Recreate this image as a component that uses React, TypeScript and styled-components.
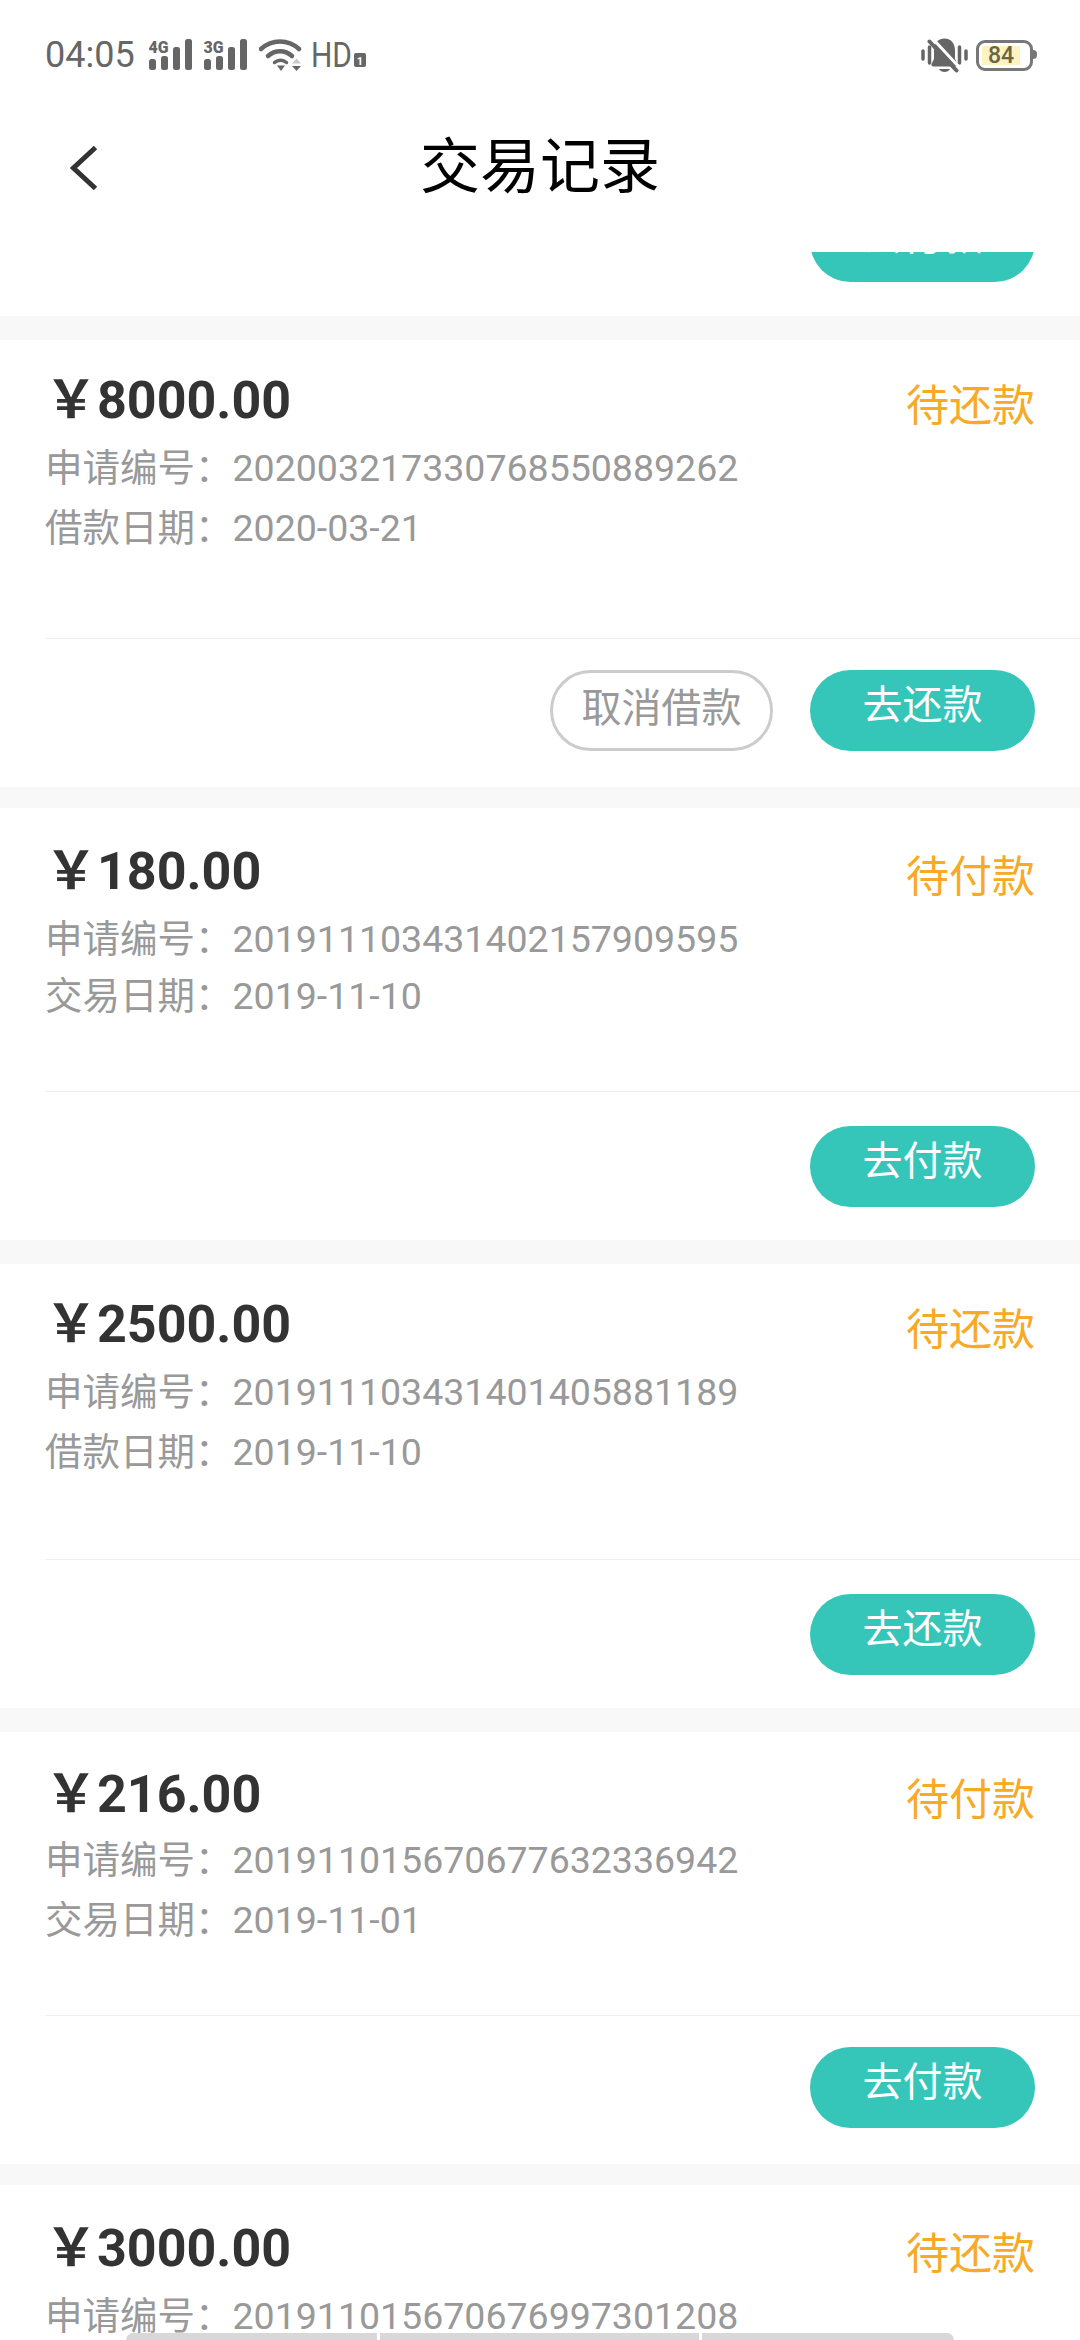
import styled, { createGlobalStyle } from 'styled-components';

const GlobalStyle = createGlobalStyle`
  html, body {
    margin: 0;
    padding: 0;
    background: #fff;
  }
  * {
    box-sizing: border-box;
  }
`;

const FONT = `Roboto, "Noto Sans CJK SC", sans-serif`;

type Record = {
  amount: string;
  status: string;
  id: string;
  dateLabel: string;
  date?: string;
  action?: string;
  cancel?: boolean;
  gap: number;
  top: number;
  idGap: number;
  dateGap: number;
  bodyGap: number;
  footTop: number;
  footBottom: number;
};

const records: Record[] = [
  { amount: '8000.00', status: '待还款', id: '202003217330768550889262', dateLabel: '借款日期', date: '2020-03-21', action: '去还款', cancel: true, gap: 24, top: 26, idGap: 14, dateGap: 3, bodyGap: 81, footTop: 31, footBottom: 36 },
  { amount: '180.00', status: '待付款', id: '201911103431402157909595', dateLabel: '交易日期', date: '2019-11-10', action: '去付款', gap: 21, top: 29, idGap: 14, dateGap: 0, bodyGap: 66, footTop: 34, footBottom: 33 },
  { amount: '2500.00', status: '待还款', id: '201911103431401405881189', dateLabel: '借款日期', date: '2019-11-10', action: '去还款', gap: 24, top: 26, idGap: 14, dateGap: 3, bodyGap: 78, footTop: 34, footBottom: 33 },
  { amount: '216.00', status: '待付款', id: '201911015670677632336942', dateLabel: '交易日期', date: '2019-11-01', action: '去付款', gap: 24, top: 28, idGap: 12, dateGap: 3, bodyGap: 66, footTop: 31, footBottom: 36 },
  { amount: '3000.00', status: '待还款', id: '201911015670676997301208', dateLabel: '借款日期', gap: 21, top: 29, idGap: 14, dateGap: 3, bodyGap: 0, footTop: 0, footBottom: 0 },
];

function SignalIcon({ label }: { label: string }) {
  return (
    <svg width="44" height="47" viewBox="0 -7 44 47" fill="#666">
      <text x="-0.5" y="13.5" fontFamily="Roboto, sans-serif" fontWeight="900" fontSize="17" textLength="20" lengthAdjust="spacingAndGlyphs">
        {label}
      </text>
      <rect x="0" y="20" width="7" height="11" rx="2.5" />
      <rect x="12" y="17" width="7" height="14" rx="2.5" />
      <rect x="24" y="8" width="7" height="23" rx="2.5" />
      <rect x="36" y="0" width="7" height="31" rx="2.5" />
    </svg>
  );
}

function WifiIcon() {
  return (
    <svg width="43" height="34" viewBox="0 0 43 34" fill="none">
      <path d="M2 11 C13 1 29 1 40 11" stroke="#666" strokeWidth="4.5" strokeLinecap="round" />
      <path d="M9 18 C16 11.5 26 11.5 33 18" stroke="#666" strokeWidth="4.5" strokeLinecap="round" />
      <path d="M15.5 24.5 C19 21.5 24 21.5 27.5 24.5" stroke="#666" strokeWidth="3.5" strokeLinecap="round" />
      <path d="M18 27.5 H26 L22 33 Z" fill="#666" />
      <path d="M33 25.5 L37.5 20.5 L42 25.5 Z" fill="#c9c9c9" />
      <path d="M33 28 H42 L37.5 33 Z" fill="#666" />
    </svg>
  );
}

function HdIcon() {
  return (
    <HdSvg width="56" height="47" viewBox="0 -10 56 47">
      <text x="0" y="25" fill="#666" fontFamily="Roboto, sans-serif" fontSize="35" textLength="41" lengthAdjust="spacingAndGlyphs">
        HD
      </text>
      <rect x="43" y="11" width="12" height="14" rx="2" fill="#666" />
      <text x="49" y="22.5" fill="#fff" fontFamily="Roboto, sans-serif" fontWeight="700" fontSize="11" textAnchor="middle">
        1
      </text>
    </HdSvg>
  );
}

function MutedBellIcon() {
  return (
    <svg width="47" height="35" viewBox="0 0 47 35" fill="none">
      <path d="M2 13 V21 M8.5 9 V25 M38.5 9 V25 M45 13 V21" stroke="#666" strokeWidth="3.5" strokeLinecap="round" />
      <path d="M23.5 0.5 C16.5 0.5 13 6 13 12.5 V21 L10.5 26 C10 27.5 11 28.5 12.5 28.5 H34.5 C36 28.5 37 27.5 36.5 26 L34 21 V12.5 C34 6 30.5 0.5 23.5 0.5 Z" fill="#666" />
      <path d="M18 31 C20 35 27 35 29 31 Z" fill="#666" />
      <path d="M11.5 0.5 L38.5 29.5" stroke="#fff" strokeWidth="3" />
      <path d="M8.5 3.5 L35.5 32.5" stroke="#666" strokeWidth="4" strokeLinecap="round" />
    </svg>
  );
}

function BackIcon() {
  return (
    <svg width="28" height="46" viewBox="0 0 28 46" fill="none">
      <path d="M25.5 2.5 L3.5 23 L25.5 43.5" stroke="#333" strokeWidth="5" />
    </svg>
  );
}

export default function App() {
  return (
    <Screen>
      <GlobalStyle />
      <Header>
        <StatusBar>
          <StatusGroup>
            <Clock>04:05</Clock>
            <SignalIcon label="4G" />
            <SignalIcon label="3G" />
            <WifiIcon />
            <HdIcon />
          </StatusGroup>
          <StatusGroup $gap={8}>
            <MutedBellIcon />
            <Battery>
              <BatteryLevel>84</BatteryLevel>
            </Battery>
          </StatusGroup>
        </StatusBar>
        <NavBar>
          <BackButton>
            <BackIcon />
          </BackButton>
          <Title>交易记录</Title>
        </NavBar>
      </Header>

      <List>
        <ScrolledTail>
          <ActionButton>去付款</ActionButton>
        </ScrolledTail>
        {records.map((r) => (
          <Card key={r.id} $gap={r.gap} $top={r.top}>
            <CardHead>
              <Amount>
                <Currency>￥</Currency>
                {r.amount}
              </Amount>
              <Status>{r.status}</Status>
            </CardHead>
            <Meta $gap={r.idGap}>申请编号：{r.id}</Meta>
            {r.date && (
              <Meta $gap={r.dateGap}>
                {r.dateLabel}：{r.date}
              </Meta>
            )}
            {r.action && (
              <>
                <Divider $gap={r.bodyGap} />
                <CardFoot $top={r.footTop} $bottom={r.footBottom}>
                  {r.cancel && <GhostButton>取消借款</GhostButton>}
                  <ActionButton>{r.action}</ActionButton>
                </CardFoot>
              </>
            )}
          </Card>
        ))}
      </List>

      <HomeBar>
        <HomeSegment $width={251} $left />
        <HomeSegment $width={319} />
        <HomeSegment $width={252} $right />
      </HomeBar>
    </Screen>
  );
}

const Screen = styled.div`
  position: relative;
  width: 1080px;
  height: 2340px;
  overflow: hidden;
  background: #f8f8f8;
  font-family: ${FONT};
`;

const Header = styled.header`
  height: 252px;
  background: #fff;
`;

const StatusBar = styled.div`
  display: flex;
  align-items: center;
  justify-content: space-between;
  height: 110px;
  padding: 0 44px 0 45px;
`;

const StatusGroup = styled.div<{ $gap?: number }>`
  display: flex;
  align-items: center;
  gap: ${(p) => p.$gap ?? 11}px;
`;

const Clock = styled.span`
  font-size: 36px;
  color: #666;
  margin-right: 3px;
`;

const HdSvg = styled.svg`
  margin-left: -2px;
`;

const Battery = styled.div`
  position: relative;
  display: flex;
  align-items: center;
  width: 57px;
  height: 31px;
  margin-right: 3px;
  padding-left: 3px;
  border: 3px solid #777;
  border-radius: 9px;

  &::after {
    content: '';
    position: absolute;
    right: -7px;
    top: 7px;
    width: 4px;
    height: 9px;
    border-radius: 0 4px 4px 0;
    background: #777;
  }
`;

const BatteryLevel = styled.span`
  width: 38px;
  height: 19px;
  background: #fdf3c0;
  color: #6b6545;
  font-size: 23px;
  font-weight: 500;
  line-height: 19px;
  text-align: center;
`;

const NavBar = styled.nav`
  display: grid;
  grid-template-columns: 1fr auto 1fr;
  align-items: center;
  height: 116px;
`;

const BackButton = styled.div`
  display: flex;
  padding-left: 70px;
`;

const Title = styled.h1`
  margin: 0;
  font-size: 60px;
  font-weight: 400;
  line-height: 116px;
  color: #000;
`;

const List = styled.main`
  display: flex;
  flex-direction: column;
`;

const ScrolledTail = styled.div`
  display: flex;
  align-items: flex-end;
  justify-content: flex-end;
  height: 64px;
  padding: 0 45px 34px;
  overflow: hidden;
  background: #fff;

  & > * {
    flex-shrink: 0;
  }
`;

const Card = styled.article<{ $gap: number; $top: number }>`
  margin-top: ${(p) => p.$gap}px;
  padding-top: ${(p) => p.$top}px;
  background: #fff;
`;

const CardHead = styled.div`
  display: flex;
  justify-content: space-between;
  height: 60px;
  padding: 0 45px;
`;

const Amount = styled.div`
  font-size: 52px;
  font-weight: 700;
  line-height: 60px;
  color: #333;
  white-space: nowrap;
`;

const Currency = styled.span`
  font-family: "Noto Sans CJK SC", sans-serif;
  font-weight: 700;
`;

const Status = styled.div`
  margin-top: 10px;
  font-size: 43px;
  line-height: 60px;
  color: #f8a925;
`;

const Meta = styled.div<{ $gap: number }>`
  margin-top: ${(p) => p.$gap}px;
  padding-left: 45px;
  font-size: 37.5px;
  line-height: 57px;
  color: #999;
  white-space: nowrap;
`;

const Divider = styled.div<{ $gap: number }>`
  height: 1px;
  margin: ${(p) => p.$gap}px 0 0 45px;
  background: #eee;
`;

const CardFoot = styled.div<{ $top: number; $bottom: number }>`
  display: flex;
  justify-content: flex-end;
  gap: 37px;
  padding: ${(p) => p.$top}px 45px ${(p) => p.$bottom}px 0;
`;

const ActionButton = styled.div`
  width: 225px;
  height: 81px;
  padding-bottom: 10px;
  border-radius: 41px;
  background: #36c6b9;
  color: #fff;
  font-size: 40px;
  line-height: 71px;
  text-align: center;
`;

const GhostButton = styled(ActionButton)`
  width: 223px;
  padding-bottom: 6px;
  border: 3px solid #ccc;
  background: #fff;
  color: #999;
`;

const HomeBar = styled.div`
  position: absolute;
  left: 126px;
  bottom: 0;
  display: flex;
  gap: 3px;
`;

const HomeSegment = styled.div<{ $width: number; $left?: boolean; $right?: boolean }>`
  width: ${(p) => p.$width}px;
  height: 7px;
  background: #d8d8d8;
  border-top-left-radius: ${(p) => (p.$left ? 7 : 0)}px;
  border-top-right-radius: ${(p) => (p.$right ? 7 : 0)}px;
`;
